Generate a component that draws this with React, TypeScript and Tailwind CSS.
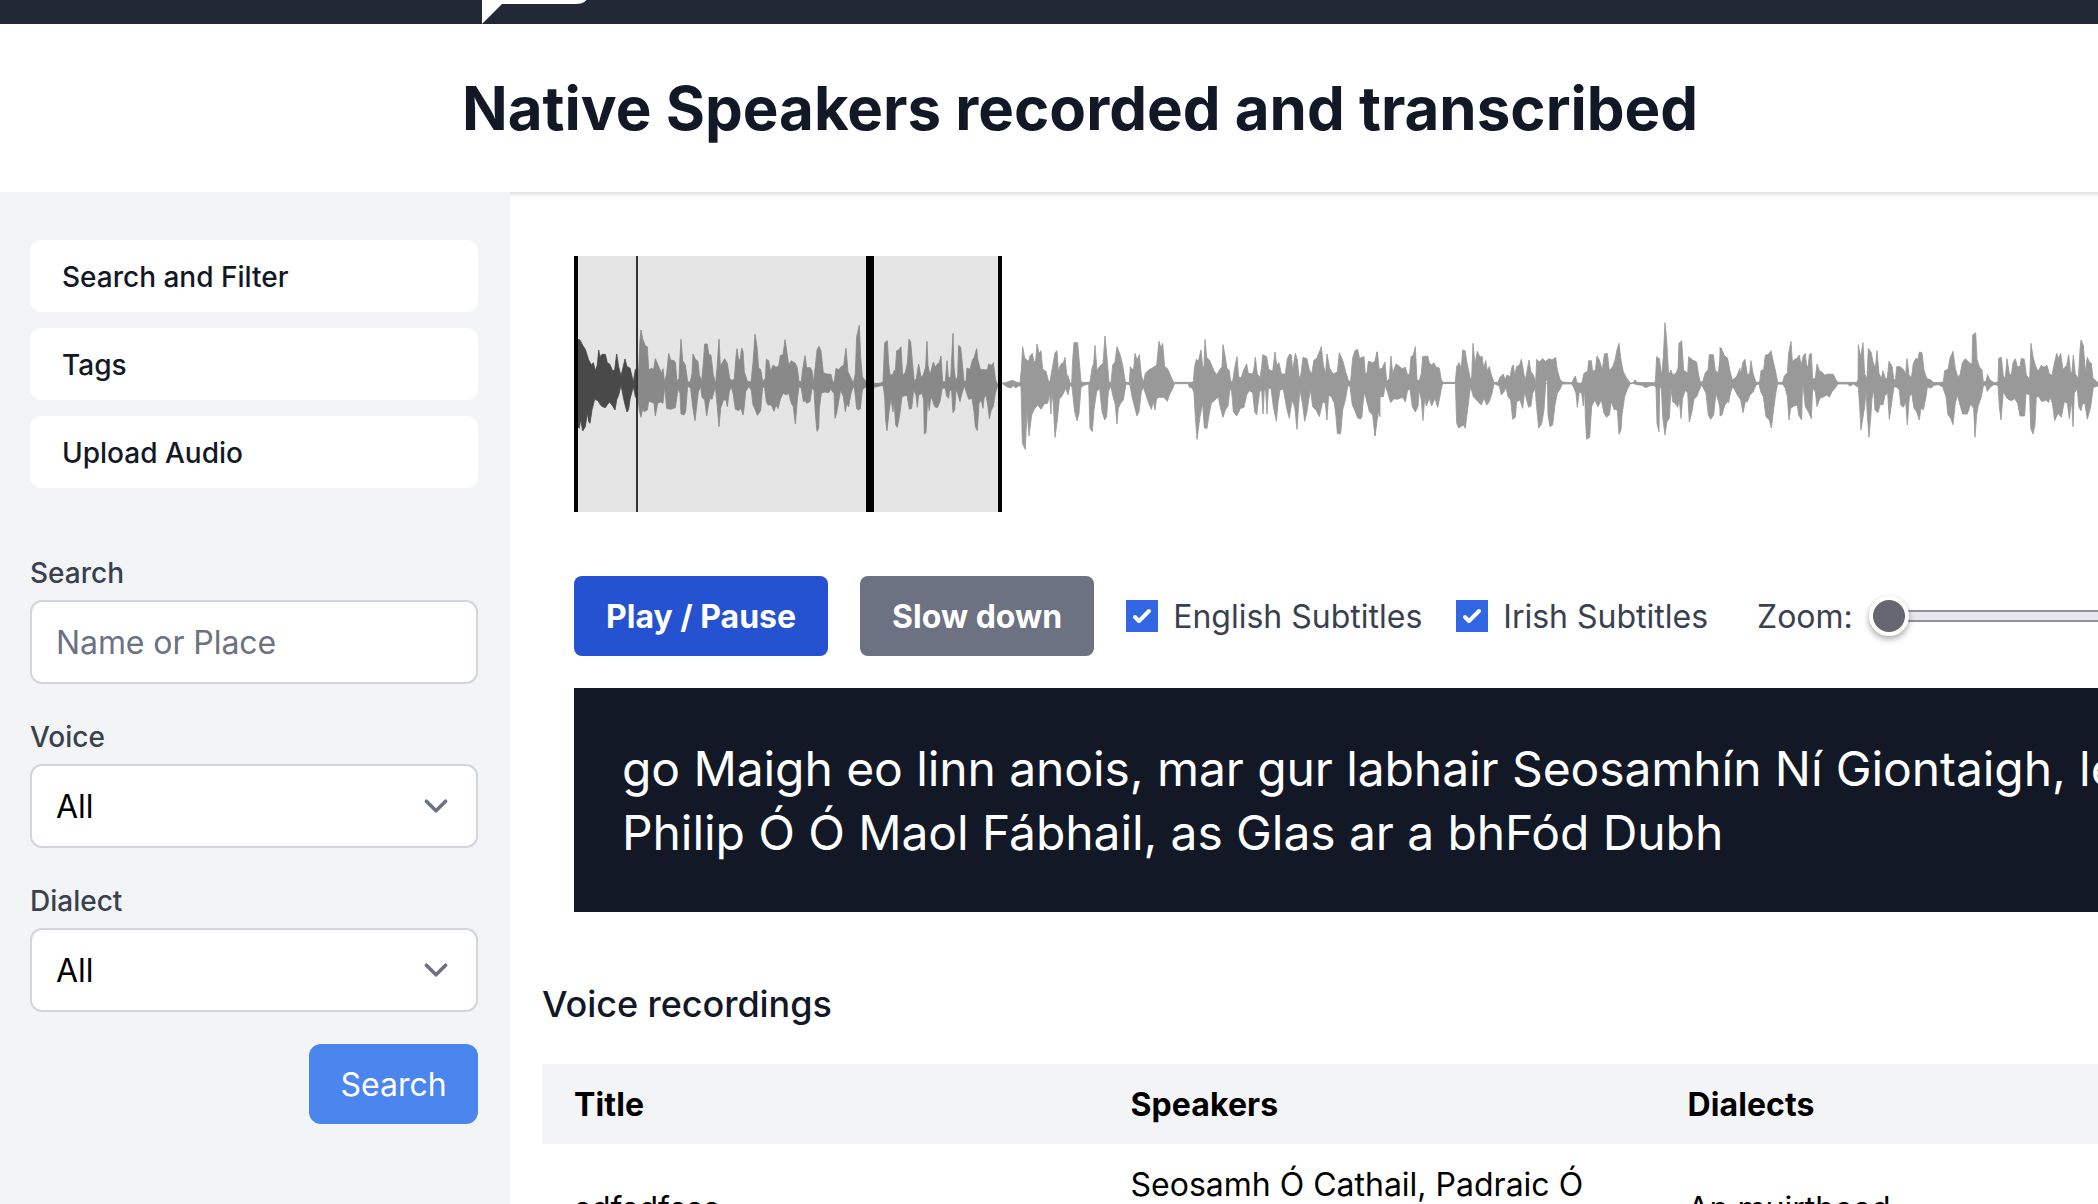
import type { ReactNode } from 'react';

type Trace = { origin: [number, number]; top: string; bottom: string; shade?: string };

/* Peaks are stored at three units per pixel, relative to each chunk's origin. */
const TRACES: Trace[] = [
  {
    origin: [-14, -16],
    top: '231,380 236,390 240,300 243,270 248,296 256,318 262,320 266,390 274,385 281,388 286,356 294,375 304,398 309,386 314,428 320,400 326,340 332,360 342,362 346,366 351,425 357,415 360,350 363,298 368,362 376,375 383,425 391,426 396,400 399,342 406,358 414,364 418,405 425,422 430,370 434,312 442,312 446,342 453,346 460,405 467,430 471,385 477,297 481,378 488,366 494,356 502,370 509,415 516,422 523,416 528,350 531,326 536,362 541,355 545,324 549,334 553,395 562,424 573,426 579,370 585,283 591,320 596,385 602,388 608,425 616,415 619,358 626,362 632,395 639,375 648,382 656,378 661,346 669,345 675,299 680,332 686,375 694,362 706,370 712,384 717,424 724,425 728,388 735,347 740,384 750,382 756,392 760,425 766,380 771,330 777,319 783,332 790,398 800,402 813,403 818,425 823,426 828,385 836,390 843,380 851,376 858,325 864,395 872,412 880,430 886,400 890,290 898,256 902,350 907,410 918,425',
    bottom: '918,440 907,450 901,506 896,510 890,506 884,450 880,438 872,465 866,500 860,492 856,515 850,470 842,450 836,485 830,520 825,535 822,460 812,448 806,458 794,456 784,460 778,505 776,565 771,574 766,520 762,450 756,445 750,485 740,490 736,482 730,485 724,445 717,440 712,480 706,552 700,500 694,490 686,460 678,465 670,460 662,475 654,506 648,495 642,514 634,495 624,495 619,485 614,445 608,440 602,512 592,526 586,510 579,495 574,450 566,440 557,455 553,500 549,525 543,505 536,512 526,508 520,465 514,440 508,455 502,500 498,480 490,480 482,505 477,560 472,500 466,440 456,478 450,475 446,492 440,528 434,480 426,472 422,440 415,455 410,500 405,542 398,500 392,445 383,438 377,515 372,525 363,522 360,460 354,448 346,503 332,508 320,505 314,440 309,490 302,486 293,490 286,528 282,490 274,486 266,484 262,510 252,515 248,505 243,532 238,512 234,475 231,478',
  },
  {
    origin: [-14, -16],
    shade: '#525252',
    top: '54,298 60,300 68,316 76,328 86,360 94,374 100,368 106,392 112,375 116,330 120,350 126,343 136,343 142,368 149,372 158,393 164,390 170,342 176,380 183,408 190,378 195,357 201,380 210,384 220,426 226,388 231,390',
    bottom: '231,478 226,470 220,440 210,478 206,508 201,516 195,494 190,472 183,436 176,466 170,480 165,510 158,498 149,486 142,494 136,503 128,500 122,496 114,482 104,478 96,510 90,550 86,545 82,518 76,560 68,573 62,538 58,565 54,560',
  },
  {
    origin: [-14, -16],
    top: '942,430 960,430 969,426 974,308 982,302 986,370 990,405 998,404 1002,392 1006,392 1010,332 1016,330 1023,320 1028,405 1036,398 1042,370 1047,297 1052,306 1058,375 1063,425 1069,415 1076,372 1083,412 1090,405 1097,380 1101,304 1104,376 1110,405 1120,366 1126,382 1132,372 1138,368 1143,348 1148,425 1156,426 1161,362 1165,410 1172,415 1176,340 1179,280 1182,382 1187,424 1193,408 1196,316 1202,322 1206,360 1212,424 1218,424 1221,384 1230,388 1238,358 1242,354 1250,326 1254,362 1261,388 1282,390 1286,372 1294,376 1300,368 1306,415 1310,430',
    bottom: '1314,434 1306,460 1300,500 1294,510 1288,536 1284,500 1278,465 1272,475 1269,505 1264,480 1257,490 1252,572 1246,560 1242,515 1236,475 1226,478 1220,460 1213,438 1206,460 1200,485 1193,460 1188,450 1184,510 1179,518 1175,455 1169,448 1166,475 1160,468 1156,445 1147,444 1140,485 1132,503 1124,500 1117,480 1112,470 1108,512 1103,475 1098,578 1093,582 1091,480 1086,460 1076,465 1072,502 1068,465 1061,450 1055,505 1048,508 1041,465 1026,470 1019,525 1012,562 1007,555 1002,478 999,516 993,475 988,508 981,572 977,540 974,470 969,436 960,438 950,440 942,442',
  },
  {
    origin: [426, 44],
    top: '6,249 18,248 28,244 38,241 48,246 60,249 64,210 68,140 74,174 80,180 86,184 90,168 97,160 102,185 107,182 111,132 117,160 123,152 128,208 138,214 146,245 150,244 158,198 165,158 171,152 175,212 183,192 190,188 195,172 200,222 205,230 210,249 215,248 218,180 222,128 233,128 238,185 243,246 253,247 265,247 270,246 276,205 281,190 285,136 291,210 302,196 309,190 315,108 321,172 327,246 333,248 338,195 345,186 351,140 361,166 368,195 376,246 388,248 391,200 396,208 401,206 405,160 411,180 418,164 424,225 430,248 436,220 446,210 460,202 470,195 477,124 483,144 488,130 494,200 503,206 512,228 521,247 568,247 580,246 584,198 589,178 595,184 603,150 608,200 612,200 615,118 620,172 628,180 635,196 642,212 650,224 660,208 666,200 669,134 676,172 681,205 688,212 692,245 698,244 704,204 711,170 716,230 723,234 732,208 740,192 745,220 758,222 762,205 766,172 772,222 780,232 785,200 788,164 800,170 806,208 818,214 825,156 830,195 837,188 844,222 856,222 862,176 869,162 874,165 878,212 886,160 892,180 897,230 902,228 909,172 921,176 928,210 935,222 942,180 950,176 957,158 964,140 970,195 977,220 981,162 989,205 1000,222 1012,215 1018,158 1029,184 1037,215 1046,244 1052,242 1058,174 1065,152 1073,148 1079,176 1085,172 1092,170 1096,225 1102,215 1106,184 1118,188 1127,184 1132,155 1137,210 1140,215',
    bottom: '1140,350 1137,330 1131,360 1125,408 1118,345 1108,335 1100,300 1094,275 1087,320 1082,356 1073,354 1066,335 1057,315 1050,260 1044,256 1036,300 1028,330 1022,402 1012,400 1008,350 1003,310 994,290 986,285 981,360 976,310 968,305 958,350 948,330 938,320 931,268 921,335 914,364 908,315 900,270 896,315 891,388 884,320 876,300 868,355 860,325 850,268 840,270 834,310 829,364 820,320 813,265 805,265 801,342 797,270 793,270 789,342 785,270 779,275 770,345 764,335 758,278 748,272 740,285 732,322 722,325 710,348 700,335 695,275 690,265 684,318 676,330 669,352 660,318 655,290 645,300 634,310 628,340 621,385 613,384 608,310 600,350 591,418 586,350 582,280 577,264 568,262 565,251 524,251 516,270 508,285 502,304 492,292 478,292 470,295 465,330 460,305 454,328 446,310 438,285 430,262 424,275 417,335 411,348 403,318 396,290 390,255 378,252 370,300 362,310 355,325 351,372 346,315 338,285 332,258 325,275 320,350 314,360 306,335 299,265 290,275 282,330 277,395 270,385 266,252 252,256 243,262 237,340 231,362 224,335 216,262 210,256 204,285 197,265 188,285 178,298 172,360 165,412 160,310 155,275 153,342 149,280 143,310 133,312 123,328 113,315 103,328 95,345 87,408 81,330 76,448 67,430 63,258 54,258 48,264 40,258 32,264 20,260 6,250',
  },
  {
    origin: [786, 44],
    top: '0,190 4,205 10,172 15,236 20,240 25,185 35,194 43,190 51,156 57,208 66,205 75,186 80,244 88,236 93,168 98,220 108,192 117,198 126,206 136,202 143,226 149,220 153,170 160,165 166,140 171,240 178,242 184,220 188,170 203,168 208,188 216,196 221,188 229,202 238,204 244,240 250,247 286,247 290,200 297,188 304,204 308,150 315,152 321,188 331,236 335,234 339,130 345,192 352,154 360,172 366,168 371,205 377,182 382,212 388,200 394,225 402,247 414,247 420,232 430,222 435,240 441,225 450,230 456,200 460,195 464,225 470,200 478,196 484,178 489,205 495,240 499,225 507,180 513,215 520,225 527,245 530,178 538,186 548,176 556,184 568,176 576,180 587,172 592,210 600,238 607,246 636,248 641,236 646,228 651,248 660,250 666,248 672,220 683,214 686,182 694,182 698,214 706,210 711,168 718,180 727,210 733,162 742,160 748,212 758,200 765,180 771,150 777,130 783,180 790,215 800,235 811,249 820,248 825,240 832,247 880,248 886,246 890,170 898,176 905,228 910,170 915,68 920,120 926,225 933,210 938,225 948,220 954,205 957,130 965,122 971,210 983,220 986,170 998,180 1010,186 1016,225 1021,246 1028,245 1036,218 1044,210 1048,164 1060,164 1066,212 1075,218 1079,185 1083,144 1092,165 1103,176 1110,215 1117,240 1130,230 1140,205',
    bottom: '1140,280 1130,265 1118,256 1110,285 1103,305 1095,315 1084,345 1077,310 1068,280 1061,345 1052,358 1045,345 1038,280 1025,254 1018,270 1010,290 1002,298 995,340 988,366 983,280 976,270 968,295 963,355 958,300 953,322 945,310 938,305 933,265 928,355 921,365 915,405 908,350 904,265 899,262 897,395 891,370 888,262 880,256 868,258 858,263 845,256 830,254 820,250 811,251 802,268 794,290 786,345 783,390 777,403 772,330 762,328 754,305 748,345 740,352 732,340 724,300 714,320 704,300 695,320 689,412 680,418 676,350 674,262 670,318 665,280 658,275 652,322 648,280 641,262 635,252 607,252 600,268 592,280 585,315 578,375 570,380 564,345 562,240 558,240 552,330 545,372 536,384 528,300 526,265 518,280 513,318 506,322 500,300 494,275 488,325 480,300 470,305 466,352 458,358 452,300 444,290 438,262 432,275 424,285 418,258 402,251 396,280 388,305 380,315 372,295 364,315 354,305 340,290 336,275 331,262 324,320 316,385 310,375 296,384 290,370 286,250 248,251 244,265 240,290 233,322 225,295 215,318 208,295 199,318 194,295 189,362 184,300 178,270 174,320 166,336 157,320 150,268 143,270 136,306 128,292 112,298 102,296 92,308 85,285 76,256 70,290 60,290 53,340 45,406 39,330 30,325 22,310 15,275 11,275 6,350 0,358',
  },
  {
    origin: [1146, 44],
    top: '0,142 8,155 13,180 21,172 28,210 37,246 46,240 55,218 64,212 69,186 75,178 82,225 89,220 93,182 99,220 108,247 119,246 123,212 131,208 136,166 146,162 153,152 160,185 167,215 173,247 188,247 193,228 202,218 206,160 213,124 217,185 224,178 230,176 238,165 243,195 250,168 256,160 260,200 265,195 268,164 274,160 278,238 286,234 291,192 298,212 308,218 314,226 324,222 340,223 348,240 354,247 410,247 414,240 415,134 422,172 429,128 434,222 441,236 445,145 454,158 459,185 466,205 471,152 477,220 484,236 489,212 496,236 502,234 507,184 516,198 521,235 526,244 530,200 540,200 550,208 557,222 561,176 567,225 574,234 580,190 588,175 594,178 598,156 606,158 612,210 620,235 633,240 640,248 665,247 670,245 674,212 684,208 690,175 699,154 706,205 713,230 720,225 727,188 736,176 750,190 756,192 758,105 767,98 771,178 778,200 786,210 790,246 798,244 803,224 810,240 822,248 834,246 836,175 844,172 850,228 856,234 861,176 868,222 874,225 879,188 886,176 892,200 900,200 904,175 913,178 919,225 929,238 933,130 939,170 946,196 954,214 964,196 972,202 981,196 988,222 996,226 1004,185 1010,160 1016,176 1022,160 1029,208 1040,196 1046,164 1052,218 1056,216 1060,165 1066,222 1075,236 1080,150 1083,120 1090,136 1096,215 1102,172 1108,186 1114,190 1119,235 1128,242 1134,248',
    bottom: '1134,258 1120,262 1112,320 1102,358 1095,312 1088,310 1083,332 1076,320 1072,265 1063,280 1059,380 1055,300 1048,356 1042,310 1033,305 1024,352 1014,340 1004,362 997,310 990,290 986,308 978,300 966,305 956,290 949,290 945,375 939,402 932,385 929,285 918,280 914,348 900,348 893,310 884,296 874,302 864,298 858,290 850,275 843,360 838,320 834,256 822,254 812,260 802,274 797,256 790,258 784,290 774,320 770,345 765,412 761,325 752,312 742,342 728,342 720,315 712,285 706,310 699,374 692,355 684,345 678,290 668,260 655,254 642,256 634,264 622,262 618,290 610,330 603,325 598,360 590,335 582,325 575,280 568,290 562,375 557,305 550,322 542,315 538,270 530,262 522,260 516,300 508,358 503,280 495,285 489,315 481,312 474,338 465,330 461,270 456,295 452,355 447,412 442,345 438,270 434,320 423,390 419,320 415,262 400,252 390,258 382,252 354,252 345,265 336,275 328,292 320,285 312,290 300,295 291,320 286,275 278,265 274,356 265,335 256,320 250,265 248,240 245,360 236,345 232,315 222,318 212,325 207,360 202,290 196,265 188,253 173,252 168,275 162,320 154,384 148,360 138,350 130,290 122,275 117,252 108,255 100,275 90,285 82,305 76,305 69,338 62,300 52,285 42,265 36,262 31,275 26,308 19,290 13,315 6,345 0,348',
  },
];

function Waveform() {
  return (
    <div className="relative h-64 w-[1600px]">
      <svg className="absolute inset-0 h-64 w-[1600px]" viewBox="0 0 1600 256">
        <path d="M0 127.5H1600" stroke="#999999" strokeWidth="1" opacity="0.7" />
        {TRACES.map((t, i) => (
          <polygon
            key={i}
            points={t.top + ' ' + t.bottom}
            fill={t.shade ?? '#999999'}
            stroke={t.shade ?? '#999999'}
            strokeWidth="2.5"
            strokeLinejoin="round"
            transform={`translate(${t.origin[0]} ${t.origin[1]}) scale(0.33333)`}
          />
        ))}
      </svg>
      <div className="absolute top-0 left-0 h-64 w-[296px] border-x-4 border-black bg-black/10" />
      <div className="absolute top-0 left-[296px] h-64 w-[132px] border-x-4 border-black bg-black/10" />
      <div className="absolute top-0 left-[62px] h-64 w-0.5 bg-[#333333]" />
    </div>
  );
}

function SideButton({ children }: { children: ReactNode }) {
  return (
    <button className="flex h-18 w-full items-center rounded-xl bg-white px-8 pt-0.5 text-left text-[28px] leading-10 font-medium text-[#121826]">
      {children}
    </button>
  );
}

function Label({ children }: { children: ReactNode }) {
  return <div className="h-10 pt-px text-[28px] leading-10 font-medium text-[#394150]">{children}</div>;
}

function SelectBox({ label }: { label: string }) {
  return (
    <div>
      <Label>{label}</Label>
      <div className="mt-2 flex h-21 items-center justify-between rounded-xl border-2 border-[#d2d6dc] bg-white pr-4 pl-6 text-[32px] leading-12 text-black">
        <span className="pt-0.5">All</span>
        <svg className="size-12" viewBox="0 0 20 20" fill="none">
          <path d="M6 8l4 4 4-4" stroke="#6c7281" strokeWidth="1.5" strokeLinecap="round" strokeLinejoin="round" />
        </svg>
      </div>
    </div>
  );
}

function Check({ label }: { label: string }) {
  return (
    <label className="flex shrink-0 items-center">
      <span className="flex size-8 items-center justify-center bg-[#3267e3]">
        <svg className="size-8" viewBox="0 0 16 16" fill="white">
          <path d="M12.207 4.793a1 1 0 010 1.414l-5 5a1 1 0 01-1.414 0l-2-2a1 1 0 011.414-1.414L6.5 9.086l4.293-4.293a1 1 0 011.414 0z" />
        </svg>
      </span>
      <span className="ml-[15px] pt-0.5 text-[32px] leading-12 text-[#394150]">{label}</span>
    </label>
  );
}

export default function App() {
  return (
    <div className="flex h-[1204px] w-[2098px] flex-col overflow-hidden bg-white font-['Inter',sans-serif]">
      <nav className="h-6 shrink-0 bg-[#212936] pl-[482px]">
        <svg className="h-6 w-28" viewBox="0 0 112 24" fill="white">
          <path d="M0 0H104.500C102 3 98 4 94 4H20L0 24Z" />
        </svg>
      </nav>
      <header className="relative h-42 w-[2120px] shrink-0 bg-white py-12 pl-[462px] shadow-[0_2px_6px_rgba(0,0,0,0.1),0_2px_4px_rgba(0,0,0,0.06)]">
        <h1 className="text-[60px] leading-18 font-bold whitespace-nowrap text-[#121826]">
          Native Speakers recorded and transcribed
        </h1>
      </header>
      <div className="flex min-h-0 flex-1">
        <aside className="relative flex w-[510px] shrink-0 flex-col bg-[#f3f4f6] pt-12 pr-8 pl-[30px]">
          <div className="flex flex-col gap-4">
            <SideButton>Search and Filter</SideButton>
            <SideButton>Tags</SideButton>
            <SideButton>Upload Audio</SideButton>
          </div>
          <div className="mt-16 flex flex-col gap-8">
            <div>
              <Label>Search</Label>
              <input
                className="mt-2 block h-21 w-full rounded-xl border-2 border-[#d2d6dc] bg-white px-6 text-[32px] leading-12 tracking-[-0.08px] placeholder:text-[#6c7281]"
                placeholder="Name or Place"
              />
            </div>
            <SelectBox label="Voice" />
            <SelectBox label="Dialect" />
            <button className="h-20 w-[169px] self-end rounded-xl bg-[#4b85ee] pt-0.5 text-center text-[32px] leading-12 text-white">
              Search
            </button>
          </div>
        </aside>
        <main className="min-w-0 flex-1 overflow-hidden">
          <div className="pt-16 pl-16">
            <Waveform />
            <div className="mt-16 flex h-20 w-[1800px] items-center">
              <button className="h-20 shrink-0 rounded-lg bg-[#2552d0] px-8 pt-0.5 text-[32px] leading-12 font-bold text-white">
                Play / Pause
              </button>
              <button className="mx-8 h-20 shrink-0 rounded-lg bg-[#6c7281] px-8 pt-0.5 text-[32px] leading-12 font-bold text-white">
                Slow down
              </button>
              <Check label="English Subtitles" />
              <div className="w-[34px] shrink-0" />
              <Check label="Irish Subtitles" />
              <span className="ml-[49px] pt-0.5 text-[32px] leading-12 text-[#394150]">Zoom:</span>
              <div className="relative ml-[14px] flex h-10 w-[400px] items-center">
                <div className="ml-2 h-3 w-full rounded-full border-2 border-[#8f8f9d] bg-[#e9e9ed]" />
                <div className="absolute top-0 left-0.5 size-10 rounded-full border-4 border-white bg-[#676774] shadow-[0_3px_6px_rgba(0,0,0,0.35)]" />
              </div>
            </div>
            <div className="mt-8 h-56 w-[1800px] bg-[#121826] px-12 pt-[49px] text-[48px] leading-16 tracking-[-0.09px] text-white">
              <p className="whitespace-nowrap">go Maigh eo linn anois, mar gur labhair Seosamhín Ní Giontaigh, le</p>
              <p className="whitespace-nowrap">Philip Ó Ó Maol Fábhail, as Glas ar a bhFód Dubh</p>
            </div>
          </div>
          <div className="w-[1800px] pl-8">
            <h3 className="mt-16 text-[36px] leading-14 font-medium tracking-[-0.06px] text-[#121826]">
              Voice recordings
            </h3>
            <div className="mt-8 grid h-20 grid-cols-[556.5px_557px_1fr] items-center bg-[#f3f4f6] pt-0.5 text-[32px] leading-12 font-bold tracking-[0.1px] text-black">
              <div className="px-8">Title</div>
              <div className="px-8">Speakers</div>
              <div className="px-8">Dialects</div>
            </div>
            <div className="grid grid-cols-[556.5px_557px_1fr] items-center pt-[17px] text-[32px] leading-12 text-black">
              <div className="px-8">sdfsdfsss</div>
              <div className="px-8">
                Seosamh Ó Cathail, Padraic Ó
                <br />
                Conghaile
              </div>
              <div className="px-8">An muirthead</div>
            </div>
          </div>
        </main>
      </div>
    </div>
  );
}
